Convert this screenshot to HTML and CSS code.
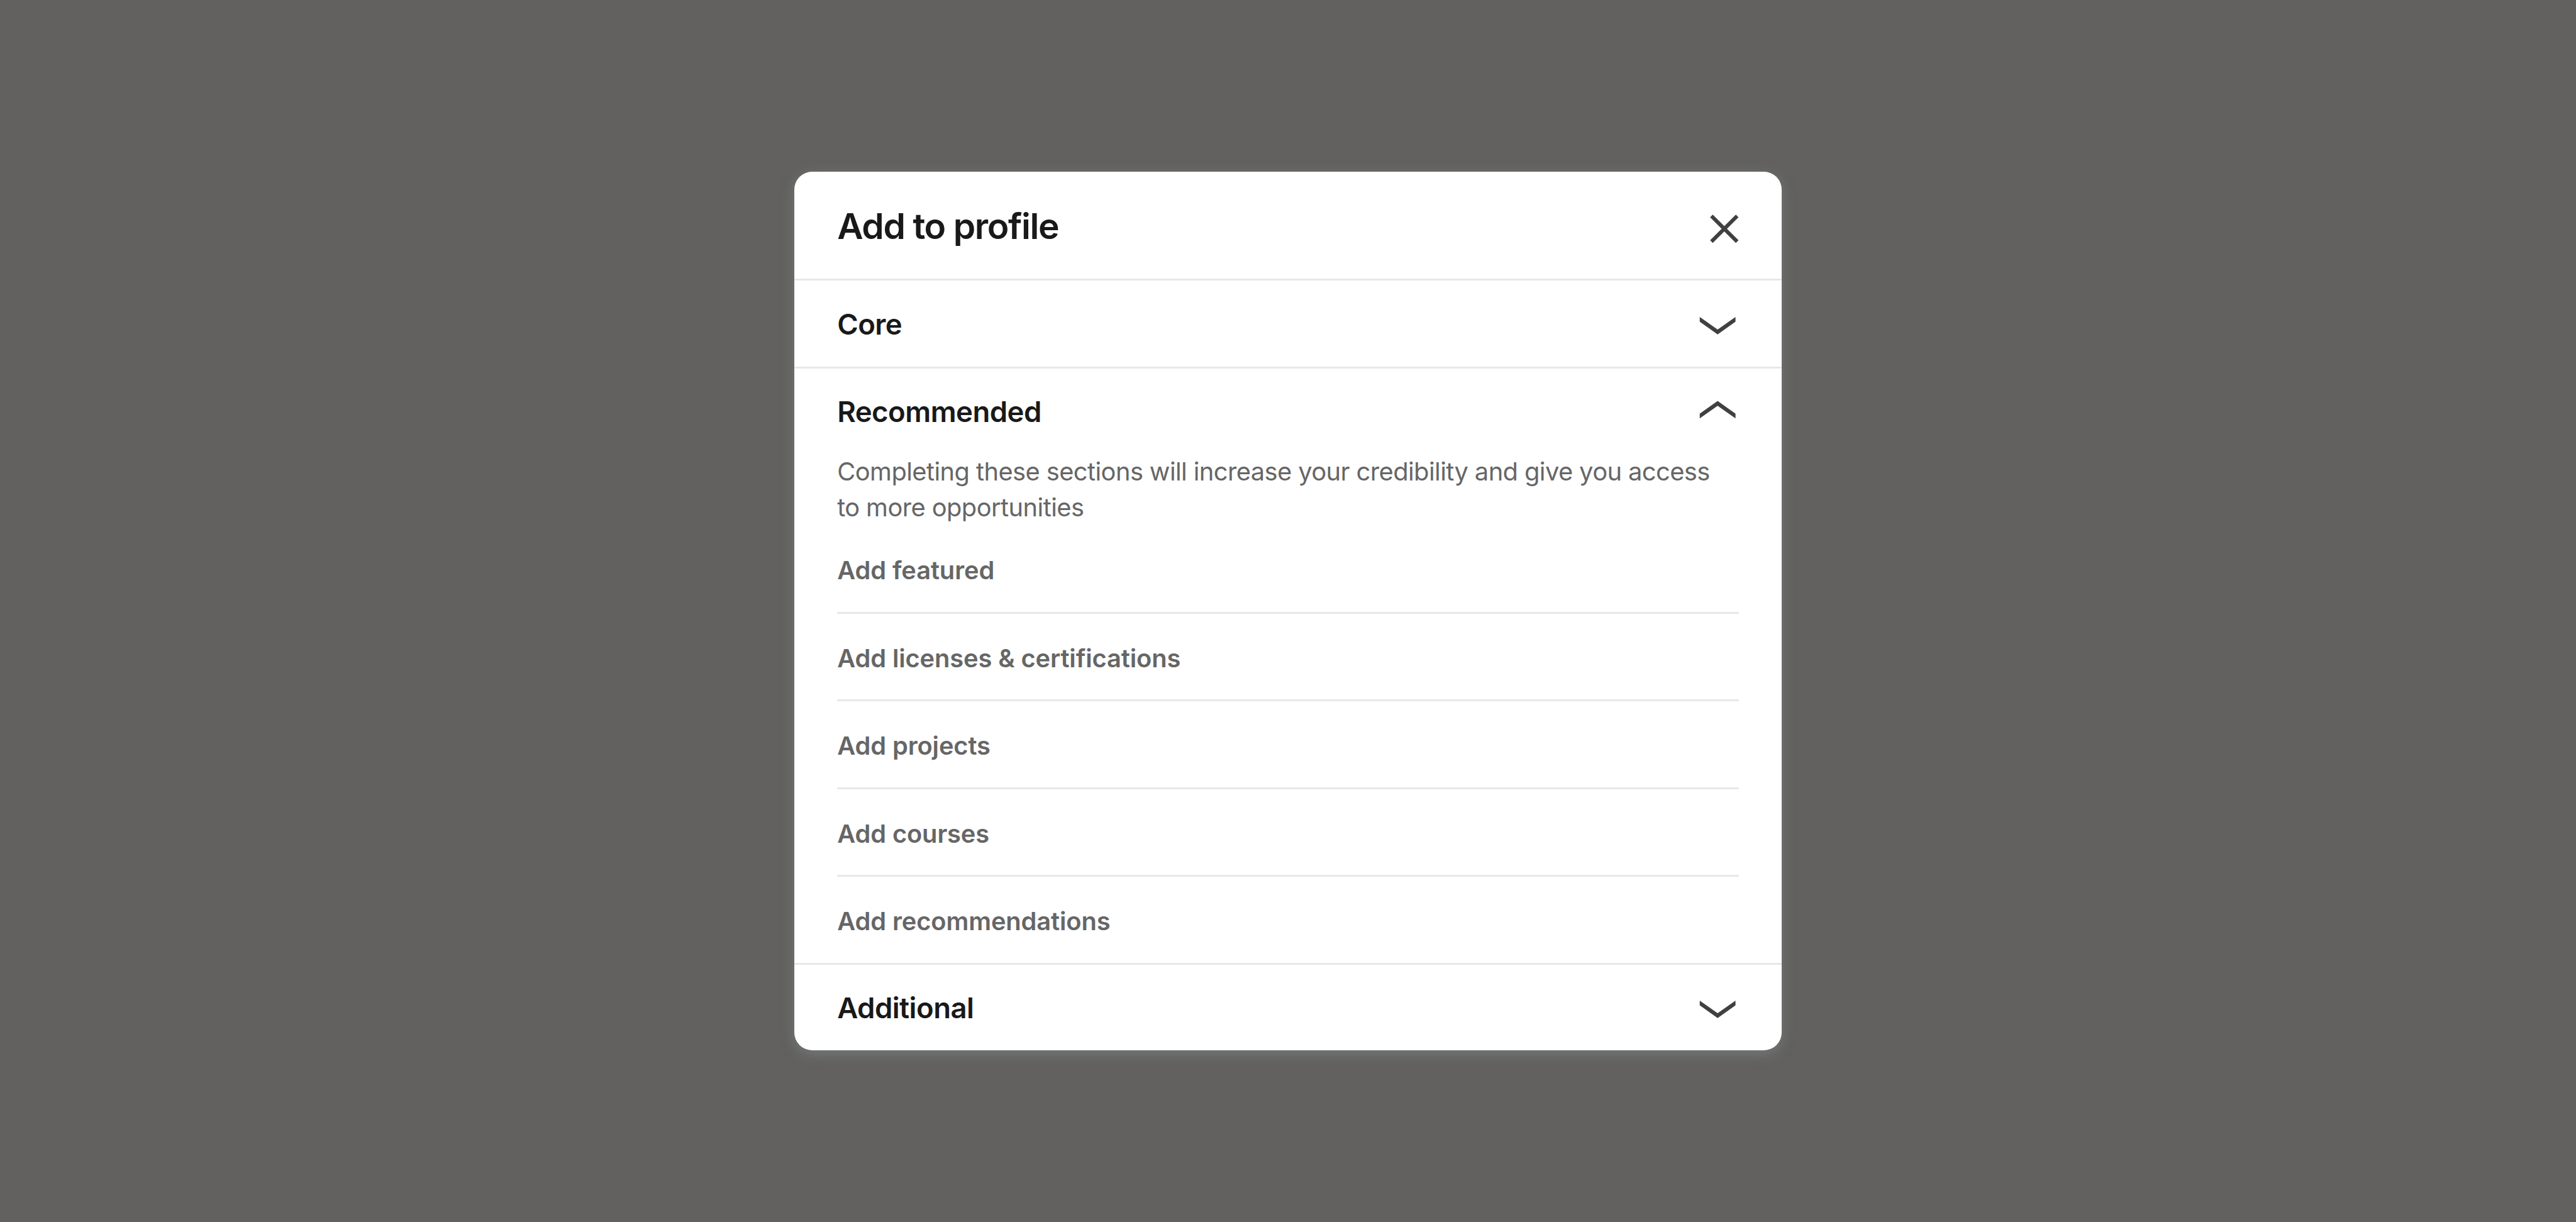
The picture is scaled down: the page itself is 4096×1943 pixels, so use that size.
FILE: index.html
```html
<!DOCTYPE html>
<html lang="en">
<head>
  <meta charset="UTF-8" />
  <meta name="viewport" content="width=device-width, initial-scale=1.0"/>
  <title>Add to profile</title>
  <link rel="stylesheet" href="styles.css">
</head>
<body>
  <div class="modal">
    <div class="modal-header">
      <h2 class="modal-title">Add to profile</h2>
      <button class="close-btn" aria-label="Dismiss">
        <svg viewBox="0 0 16 16"><path d="M.8.8l14.4 14.4M15.2.8L.8 15.2"/></svg>
      </button>
    </div>

    <!-- Core -->
    <div class="section">
      <div class="section-header">
        <h3>Core</h3>
        <svg class="chevron" viewBox="0 0 24 24"><path d="M2 8.05l10 7.1 10-7.1v2.7l-10 7.1-10-7.1z"/></svg>
      </div>
    </div>

    <!-- Recommended (open) -->
    <div class="section">
      <div class="section-header">
        <h3>Recommended</h3>
        <svg class="chevron" viewBox="0 0 24 24"><path d="M2 15.95l10-7.1 10 7.1v-2.7l-10-7.1-10 7.1z"/></svg>
      </div>
      <div class="section-body">
        <p class="section-text">Completing these sections will increase your credibility and give you access<br>to more opportunities</p>
        <ul class="section-list">
          <li>Add featured</li>
          <li>Add licenses &amp; certifications</li>
          <li>Add projects</li>
          <li>Add courses</li>
          <li>Add recommendations</li>
        </ul>
      </div>
    </div>

    <!-- Additional -->
    <div class="section">
      <div class="section-header">
        <h3>Additional</h3>
        <svg class="chevron" viewBox="0 0 24 24"><path d="M2 8.05l10 7.1 10-7.1v2.7l-10 7.1-10-7.1z"/></svg>
      </div>
    </div>
  </div>
</body>
</html>
```
FILE: styles.css
```css
:root {
  --text: #191919;
  --muted: #666;
  --line: #e8e8e8;
  --icon: #404040;
}

* {
  box-sizing: border-box;
}

html {
  font-size: 28.444px;
}

body {
  margin: 0;
  height: 100vh;
  display: flex;
  justify-content: center;
  align-items: center;
  background-color: #62615f;
  color: var(--text);
  font-family: Inter, "Liberation Sans", sans-serif;
}

.modal {
  width: 55.2rem;
  background-color: #fff;
  border-radius: 1rem;
  box-shadow: 0 0.2rem 0.7rem rgba(134, 144, 146, 0.5);
}

.modal-header {
  display: flex;
  justify-content: space-between;
  align-items: center;
  height: 6rem;
  padding: 0 2.4rem;
}

.modal-title {
  margin: 0.1rem 0 0;
  font-size: 2rem;
  font-weight: 600;
  letter-spacing: -1.4px;
}

.close-btn {
  margin: 0.4rem 0 0;
  padding: 0;
  border: none;
  background: none;
  line-height: 0;
  cursor: pointer;
}

.close-btn svg {
  width: 1.6rem;
  height: 1.6rem;
  fill: none;
  stroke: var(--icon);
  stroke-width: 2.1;
}

.section {
  border-top: 3px solid var(--line);
}

.section-header {
  display: flex;
  justify-content: space-between;
  align-items: center;
  height: 4.8rem;
  padding: 0 2.4rem;
}

.section-header h3 {
  margin: 0.05rem 0 0;
  font-size: 1.6rem;
  font-weight: 600;
  letter-spacing: -0.55px;
}

.chevron {
  width: 2.4rem;
  height: 2.4rem;
  fill: var(--icon);
}

.section-body {
  padding: 0 2.4rem;
  font-size: 1.4rem;
  line-height: 2rem;
  color: var(--muted);
}

.section-text {
  margin: 0;
  letter-spacing: -0.54px;
  word-spacing: -0.2px;
}

.section-list {
  margin: 0;
  padding: 0;
  list-style: none;
  font-weight: 600;
  letter-spacing: -0.1px;
}

.section-list li {
  padding: 1.51rem 0 1.29rem;
}

.section-list li + li {
  border-top: 3px solid var(--line);
}
```
